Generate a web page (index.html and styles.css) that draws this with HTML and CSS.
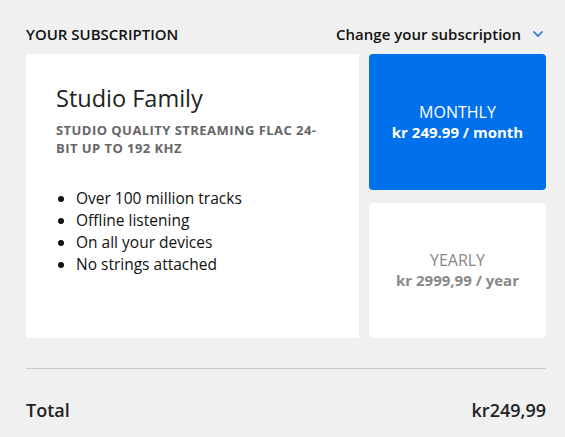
FILE: index.html
```html
<!DOCTYPE html>
<html>
<head>
<meta charset="utf-8">
<link rel="stylesheet" href="styles.css">
</head>
<body>
<div class="page">
  <div class="header">
    <div class="title">YOUR SUBSCRIPTION</div>
    <div class="change">Change your subscription
      <svg class="chev" width="12" height="8" viewBox="0 0 12 8"><path d="M1.5 1.5 L6 6 L10.5 1.5" fill="none" stroke="#1a6fe8" stroke-width="1.6"/></svg>
    </div>
  </div>
  <div class="grid">
    <div class="plan">
      <h2 class="plan-name">Studio Family</h2>
      <div class="plan-sub">STUDIO QUALITY STREAMING FLAC 24-BIT UP TO 192 KHZ</div>
      <ul class="features">
        <li>Over 100 million tracks</li>
        <li>Offline listening</li>
        <li>On all your devices</li>
        <li>No strings attached</li>
      </ul>
    </div>
    <div class="options">
      <div class="opt active">
        <div class="opt-name">MONTHLY</div>
        <div class="opt-price">kr 249.99 / month</div>
      </div>
      <div class="opt">
        <div class="opt-name">YEARLY</div>
        <div class="opt-price">kr 2999,99 / year</div>
      </div>
    </div>
  </div>
  <div class="divider"></div>
  <div class="total">
    <span>Total</span>
    <span>kr249,99</span>
  </div>
</div>
</body>
</html>
```
FILE: styles.css
```css
html, body {
  margin: 0;
  padding: 0;
  background: #f0f0f0;
}
body {
  font-family: "Open Sans", "Noto Sans", sans-serif;
  color: #1a1a1a;
}
.page {
  padding: 24px 19px 0 26px;
}
.header {
  display: flex;
  justify-content: space-between;
  align-items: center;
  height: 20px;
  font-size: 15px;
  font-weight: 600;
  color: #111;
}
.change {
  display: flex;
  align-items: center;
  gap: 11px;
}
.chev { margin-right: 2px; }
.grid {
  margin-top: 10px;
  display: flex;
  gap: 10px;
  height: 284px;
}
.plan {
  flex: 0 0 333px;
  background: #fff;
  box-sizing: border-box;
  padding: 28px 30px;
}
.plan-name {
  margin: 0;
  font-size: 23.5px;
  font-weight: 500;
  line-height: 32px;
  color: #222;
}
.plan-sub {
  margin-top: 7px;
  max-width: 262px;
  font-size: 13px;
  font-weight: 700;
  line-height: 18px;
  letter-spacing: 0.45px;
  color: #666;
}
.features {
  margin: 30px 0 0;
  padding-left: 20px;
  font-size: 15.5px;
  line-height: 22px;
  color: #111;
}
.options {
  flex: 1;
  display: flex;
  flex-direction: column;
  gap: 13px;
}
.opt {
  flex: 1;
  background: #fff;
  border-radius: 4px;
  display: flex;
  flex-direction: column;
  align-items: center;
  justify-content: center;
  color: #888;
}
.opt.active {
  background: #0070ec;
  color: #fff;
}
.opt-name {
  font-size: 16px;
  line-height: 20px;
}
.opt-price {
  font-size: 15px;
  font-weight: 700;
  line-height: 20px;
}
.divider {
  margin-top: 30px;
  height: 1px;
  background: #c8c8c8;
}
.total {
  display: flex;
  justify-content: space-between;
  margin-top: 29px;
  font-size: 18px;
  font-weight: 600;
  color: #222;
}
```
